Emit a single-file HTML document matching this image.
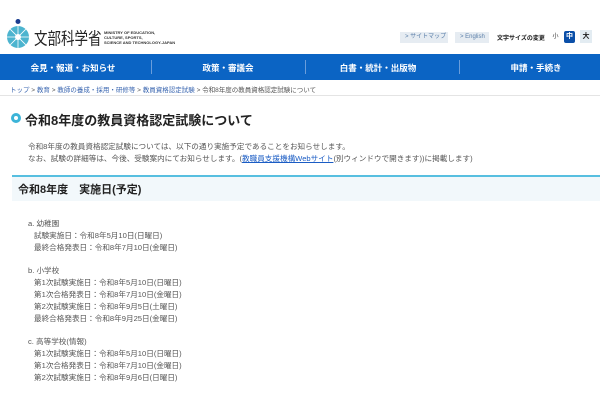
<!DOCTYPE html>
<html><head><meta charset="utf-8"><style>
*{margin:0;padding:0;box-sizing:border-box}
body{width:600px;height:400px;overflow:hidden;background:#fff;font-family:"Liberation Sans","Noto Sans CJK JP",sans-serif;color:#333;position:relative}
.a{position:absolute;white-space:nowrap}
.nav{position:absolute;left:0;top:54px;width:600px;height:26px;background:#0b64c4}
.nav span{position:absolute;top:8px;color:#fff;font-size:8.5px;font-weight:bold;transform:translateX(-50%)}
.nav i{position:absolute;top:6px;width:1px;height:14px;background:#6a9ddb}
.btn{position:absolute;top:32px;height:11px;background:#e6ecf2;color:#5a7ea8;font-size:6px;line-height:11px;padding-left:5px}
.t{font-size:7.6px;color:#555;line-height:12px}
</style></head><body>
<svg class="a" style="left:6px;top:18px" width="26" height="32" viewBox="0 0 26 32">
<circle cx="12" cy="3.5" r="2.5" fill="#1a3d8f"/>
<circle cx="12" cy="19" r="11" fill="#4cb4cf"/>
<circle cx="12" cy="19" r="3" fill="#fff"/>
<g stroke="#fff" stroke-width="0.8"><line x1="12" y1="8" x2="12" y2="30"/><line x1="1" y1="19" x2="23" y2="19"/><line x1="4.2" y1="11.2" x2="19.8" y2="26.8"/><line x1="19.8" y1="11.2" x2="4.2" y2="26.8"/></g>
</svg>
<div class="a" style="left:34px;top:28px;font-size:13.5px;line-height:18px;color:#222;transform:scaleY(1.25);transform-origin:top left">文部科学省</div>
<div class="a" style="left:104px;top:30px;font-size:4px;line-height:5px;color:#333;font-weight:bold">MINISTRY OF EDUCATION,<br>CULTURE, SPORTS,<br>SCIENCE AND TECHNOLOGY-JAPAN</div>
<div class="btn" style="left:400px;width:48px">&gt; サイトマップ</div>
<div class="btn" style="left:455px;width:34px">&gt; English</div>
<div class="a" style="left:497px;top:33px;font-size:6px;font-weight:bold;color:#222">文字サイズの変更</div>
<div class="a" style="left:550px;top:32px;width:11px;height:11px;font-size:6px;text-align:center;line-height:11px;color:#333">小</div>
<div class="a" style="left:564px;top:31px;width:11px;height:12px;background:#0b4fa8;border-radius:2px;font-size:7px;text-align:center;line-height:12px;color:#fff;font-weight:bold">中</div>
<div class="a" style="left:580px;top:30px;width:12px;height:13px;background:#e3ecf2;font-size:7px;text-align:center;line-height:13px;color:#222;font-weight:bold">大</div>
<div class="nav">
<span style="left:73px">会見・報道・お知らせ</span><i style="left:151px"></i>
<span style="left:228px">政策・審議会</span><i style="left:305px"></i>
<span style="left:378px">白書・統計・出版物</span><i style="left:459px"></i>
<span style="left:536px">申請・手続き</span>
</div>
<div class="a" style="left:10px;top:84px;font-size:6.5px;color:#555"><span style="color:#3a66b0">トップ</span> &gt; <span style="color:#3a66b0">教育</span> &gt; <span style="color:#3a66b0">教師の養成・採用・研修等</span> &gt; <span style="color:#3a66b0">教員資格認定試験</span> &gt; 令和8年度の教員資格認定試験について</div>
<div class="a" style="left:0;top:95px;width:600px;height:1px;background:#e4e4e4"></div>
<div class="a" style="left:11px;top:113px;width:10px;height:10px;border-radius:50%;border:3px solid #3cb4d8"></div>
<div class="a" style="left:25px;top:110px;font-size:13px;font-weight:bold;color:#222">令和8年度の教員資格認定試験について</div>
<div class="a t" style="left:28px;top:141px">令和8年度の教員資格認定試験については、以下の通り実施予定であることをお知らせします。<br>なお、試験の詳細等は、今後、受験案内にてお知らせします。(<span style="color:#1a5cc4;text-decoration:underline">教職員支援機構Webサイト</span>(別ウィンドウで開きます))に掲載します)</div>
<div class="a" style="left:12px;top:175px;width:588px;height:26px;background:#f2f8fb;border-top:2px solid #57bfe0"></div>
<div class="a" style="left:18px;top:181px;font-size:11px;font-weight:bold;color:#222">令和8年度　実施日(予定)</div>
<div class="a t" style="left:28px;top:218px">a. 幼稚園</div>
<div class="a t" style="left:34px;top:230px">試験実施日：令和8年5月10日(日曜日)<br>最終合格発表日：令和8年7月10日(金曜日)</div>
<div class="a t" style="left:28px;top:265px">b. 小学校</div>
<div class="a t" style="left:34px;top:277px">第1次試験実施日：令和8年5月10日(日曜日)<br>第1次合格発表日：令和8年7月10日(金曜日)<br>第2次試験実施日：令和8年9月5日(土曜日)<br>最終合格発表日：令和8年9月25日(金曜日)</div>
<div class="a t" style="left:28px;top:336px">c. 高等学校(情報)</div>
<div class="a t" style="left:34px;top:348px">第1次試験実施日：令和8年5月10日(日曜日)<br>第1次合格発表日：令和8年7月10日(金曜日)<br>第2次試験実施日：令和8年9月6日(日曜日)</div>
</body></html>
